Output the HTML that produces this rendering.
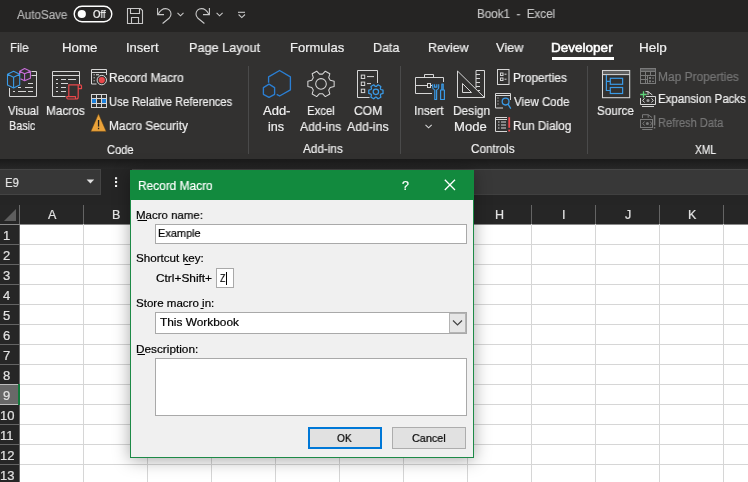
<!DOCTYPE html>
<html><head><meta charset="utf-8">
<style>
html,body{margin:0;padding:0;}
body{width:748px;height:482px;overflow:hidden;position:relative;background:#fff;font-family:"Liberation Sans",sans-serif;}
.a{position:absolute;box-sizing:border-box;}
.t{position:absolute;white-space:pre;line-height:1;transform-origin:0 0;will-change:transform;-webkit-text-stroke-width:0.2px;}
svg{position:absolute;left:0;top:0;overflow:visible;}
</style></head><body>
<!-- title bar -->
<div class="a" style="left:0;top:0;width:748px;height:32px;background:#252423"></div>
<!-- ribbon -->
<div class="a" style="left:0;top:32px;width:748px;height:127px;background:#323130"></div>
<div class="a" style="left:552px;top:57px;width:62px;height:3px;background:#ffffff"></div>
<div class="a" style="left:247.5px;top:66px;width:1px;height:88px;background:#4a4a4a"></div>
<div class="a" style="left:399.5px;top:66px;width:1px;height:88px;background:#4a4a4a"></div>
<div class="a" style="left:586.5px;top:66px;width:1px;height:88px;background:#4a4a4a"></div>
<!-- formula band -->
<div class="a" style="left:0;top:159px;width:748px;height:65px;background:#252525"></div>
<div class="a" style="left:0;top:159px;width:748px;height:10px;background:linear-gradient(#1a1a1a,#272727)"></div>
<div class="a" style="left:0;top:169px;width:101px;height:26px;background:#373737;border:1px solid #444;border-left:none"></div>
<div class="a" style="left:132px;top:169px;width:616px;height:26px;background:#383838;border-top:1px solid #464646;border-bottom:1px solid #404040"></div>
<!-- header row -->
<div class="a" style="left:0;top:205px;width:748px;height:19px;background:#262626"></div>
<!-- cells -->
<div class="a" style="left:20px;top:224px;width:728px;height:258px;background:#ffffff"></div>
<div class="a" style="left:0;top:224px;width:19px;height:258px;background:#262626"></div>
<div class="a" style="left:19px;top:205px;width:1px;height:277px;background:#6a6a6a"></div>
<div class="a" style="left:0;top:224px;width:748px;height:1px;background:#8a8a8a"></div>
<div class="a" style="left:83px;top:205px;width:1px;height:19px;background:#646464"></div>
<div class="a" style="left:83px;top:224px;width:1px;height:258px;background:#d6d6d6"></div>
<div class="a" style="left:147px;top:205px;width:1px;height:19px;background:#646464"></div>
<div class="a" style="left:147px;top:224px;width:1px;height:258px;background:#d6d6d6"></div>
<div class="a" style="left:211px;top:205px;width:1px;height:19px;background:#646464"></div>
<div class="a" style="left:211px;top:224px;width:1px;height:258px;background:#d6d6d6"></div>
<div class="a" style="left:275px;top:205px;width:1px;height:19px;background:#646464"></div>
<div class="a" style="left:275px;top:224px;width:1px;height:258px;background:#d6d6d6"></div>
<div class="a" style="left:339px;top:205px;width:1px;height:19px;background:#646464"></div>
<div class="a" style="left:339px;top:224px;width:1px;height:258px;background:#d6d6d6"></div>
<div class="a" style="left:403px;top:205px;width:1px;height:19px;background:#646464"></div>
<div class="a" style="left:403px;top:224px;width:1px;height:258px;background:#d6d6d6"></div>
<div class="a" style="left:467px;top:205px;width:1px;height:19px;background:#646464"></div>
<div class="a" style="left:467px;top:224px;width:1px;height:258px;background:#d6d6d6"></div>
<div class="a" style="left:531px;top:205px;width:1px;height:19px;background:#646464"></div>
<div class="a" style="left:531px;top:224px;width:1px;height:258px;background:#d6d6d6"></div>
<div class="a" style="left:595px;top:205px;width:1px;height:19px;background:#646464"></div>
<div class="a" style="left:595px;top:224px;width:1px;height:258px;background:#d6d6d6"></div>
<div class="a" style="left:659px;top:205px;width:1px;height:19px;background:#646464"></div>
<div class="a" style="left:659px;top:224px;width:1px;height:258px;background:#d6d6d6"></div>
<div class="a" style="left:723px;top:205px;width:1px;height:19px;background:#646464"></div>
<div class="a" style="left:723px;top:224px;width:1px;height:258px;background:#d6d6d6"></div>
<div class="a" style="left:787px;top:205px;width:1px;height:19px;background:#646464"></div>
<div class="a" style="left:787px;top:224px;width:1px;height:258px;background:#d6d6d6"></div>
<div class="a" style="left:20px;top:244px;width:728px;height:1px;background:#d6d6d6"></div>
<div class="a" style="left:0;top:244px;width:19px;height:1px;background:#646464"></div>
<div class="a" style="left:20px;top:264px;width:728px;height:1px;background:#d6d6d6"></div>
<div class="a" style="left:0;top:264px;width:19px;height:1px;background:#646464"></div>
<div class="a" style="left:20px;top:284px;width:728px;height:1px;background:#d6d6d6"></div>
<div class="a" style="left:0;top:284px;width:19px;height:1px;background:#646464"></div>
<div class="a" style="left:20px;top:304px;width:728px;height:1px;background:#d6d6d6"></div>
<div class="a" style="left:0;top:304px;width:19px;height:1px;background:#646464"></div>
<div class="a" style="left:20px;top:324px;width:728px;height:1px;background:#d6d6d6"></div>
<div class="a" style="left:0;top:324px;width:19px;height:1px;background:#646464"></div>
<div class="a" style="left:20px;top:344px;width:728px;height:1px;background:#d6d6d6"></div>
<div class="a" style="left:0;top:344px;width:19px;height:1px;background:#646464"></div>
<div class="a" style="left:20px;top:364px;width:728px;height:1px;background:#d6d6d6"></div>
<div class="a" style="left:0;top:364px;width:19px;height:1px;background:#646464"></div>
<div class="a" style="left:20px;top:384px;width:728px;height:1px;background:#d6d6d6"></div>
<div class="a" style="left:0;top:384px;width:19px;height:1px;background:#646464"></div>
<div class="a" style="left:20px;top:404px;width:728px;height:1px;background:#d6d6d6"></div>
<div class="a" style="left:0;top:404px;width:19px;height:1px;background:#646464"></div>
<div class="a" style="left:20px;top:424px;width:728px;height:1px;background:#d6d6d6"></div>
<div class="a" style="left:0;top:424px;width:19px;height:1px;background:#646464"></div>
<div class="a" style="left:20px;top:444px;width:728px;height:1px;background:#d6d6d6"></div>
<div class="a" style="left:0;top:444px;width:19px;height:1px;background:#646464"></div>
<div class="a" style="left:20px;top:464px;width:728px;height:1px;background:#d6d6d6"></div>
<div class="a" style="left:0;top:464px;width:19px;height:1px;background:#646464"></div>
<!-- row 9 header highlight -->
<div class="a" style="left:0;top:384px;width:18px;height:21px;background:#686868;border-top:1px solid #bdbdbd;border-bottom:1px solid #bdbdbd"></div>
<div class="a" style="left:18px;top:384px;width:2px;height:21px;background:#137a3c"></div>
<svg width="748" height="482">
 <!-- corner triangle -->
 <polygon points="16,209 16,221 4,221" fill="#5e5e5e"/>
 <!-- toggle -->
 <rect x="74.2" y="6.2" width="37.6" height="15.6" rx="7.8" fill="none" stroke="#fff" stroke-width="1.4"/>
 <circle cx="81.8" cy="14" r="4.1" fill="#fff"/>
 <!-- save -->
 <g fill="none" stroke="#c8c8c8" stroke-width="1.1">
  <path d="M127.5,8.5 H140.5 L142.5,10.5 V23.5 H127.5 Z"/>
  <path d="M130.5,8.5 V13.5 H139.5 V8.5"/>
  <path d="M131.5,23.5 V17.5 H138.5 V23.5"/>
 </g>
 <!-- undo -->
 <g fill="none" stroke="#c8c8c8" stroke-width="1.1" stroke-linecap="butt">
  <path d="M157.6,8 V14.6 H164"/>
  <path d="M158.3,14 C160.3,10.3 162.8,8.6 165.5,8.6 C168.6,8.6 171,11 171,14 C171,15.7 170.3,16.9 169.3,18 L162.6,23.5"/>
  <path d="M177.5,12.9 L180.5,15.8 L183.5,12.9"/>
  <path d="M209.4,8 V14.6 H203"/>
  <path d="M208.7,14 C206.7,10.3 204.2,8.6 201.5,8.6 C198.4,8.6 196,11 196,14 C196,15.7 196.7,16.9 197.7,18 L204.4,23.5"/>
  <path d="M216.6,12.9 L219.6,15.8 L222.6,12.9"/>
  <path d="M238,12.3 H245"/>
  <path d="M238.6,14.5 L241.8,17.6 L245,14.5"/>
 </g>
 <!-- name box arrow + dots -->
 <polygon points="86.6,179.4 94.2,179.4 90.4,183.6" fill="#e0e0e0"/>
 <rect x="115" y="177.2" width="2.1" height="2.1" fill="#f4f4f4"/>
 <rect x="115" y="181" width="2.1" height="2.1" fill="#f4f4f4"/>
 <rect x="115" y="184.9" width="2.1" height="2.1" fill="#f4f4f4"/>
<g fill="none" stroke="#d6d6d6" stroke-width="1">
 <path d="M9.5,88 V96.5 H36.5 V71.5 H31.5"/>
 <path d="M31.5,75.5 H36.5"/>
 <path d="M28,83.5 H33 M18,87.5 H21 M25,87.5 H33 M13,91.5 H15 M18,91.5 H26 M28,91.5 H33"/>
</g>
<g fill="none" stroke="#3a9ae6" stroke-width="1.1" stroke-linejoin="round">
 <path d="M7.5,74.3 L13.6,71.3 L19.7,74.3 V85 L13.6,88 L7.5,85 Z M7.5,74.3 L13.6,77.3 L19.7,74.3 M13.6,77.3 V88"/>
</g>
<g fill="none" stroke="#c76dd8" stroke-width="1.1" stroke-linejoin="round">
 <path d="M19.7,74.3 V71.2 L24.6,68.6 L30.4,71.2 V78.2 L24.6,80.8 L20.5,78.8 M19.7,71.2 L24.6,73.8 L30.4,71.2 M24.6,73.8 V80.8"/>
</g>
<g fill="none" stroke="#d6d6d6" stroke-width="1">
 <path d="M65.5,96.5 H52.5 V71.5 H79.5 V84"/>
 <path d="M52.5,75.5 H79.5"/>
 <path d="M56,79.5 H58 M61,79.5 H66 M68,79.5 H76 M56,83.5 H58 M61,83.5 H68 M56,87.5 H58 M61,87.5 H66 M56,91.5 H58 M61,91.5 H66"/>
</g>
<path d="M68.8,96.5 V84.8 H80 Q81.5,84.8 81.5,86.3 V88.6 H78.2 M78.2,84.8 V97 Q78.2,99 76.2,99 H68 Q66.8,99 66.8,97.8 V96.6 H75.5 V99" fill="none" stroke="#e9484b" stroke-width="1.2" stroke-linejoin="round"/>
<g fill="none" stroke="#d6d6d6" stroke-width="1">
 <path d="M96.5,84 H91.5 V69.5 H106.5 V75"/>
 <path d="M91.5,72.5 H106.5"/>
</g>
<g fill="#d6d6d6"><rect x="93.6" y="74.2" width="1.1" height="1.1"/><rect x="93.6" y="77.2" width="1.1" height="1.1"/><rect x="93.6" y="80.2" width="1.1" height="1.1"/><rect x="96" y="74.2" width="3" height="1.1"/></g>
<circle cx="101.8" cy="80.1" r="4.7" fill="#323130" stroke="#d6d6d6" stroke-width="1"/>
<circle cx="101.8" cy="80.1" r="3.1" fill="#e9484b"/>
<rect x="91.5" y="98.5" width="15" height="5" fill="#1c7fd9"/>
<rect x="96.5" y="98.5" width="5" height="5" fill="#323130"/>
<g fill="none" stroke="#d6d6d6" stroke-width="1">
 <rect x="91.5" y="94.5" width="15" height="13"/>
 <path d="M96.5,94.5 V107.5 M101.5,94.5 V107.5 M91.5,98.5 H106.5 M91.5,103.5 H106.5"/>
</g>
<path d="M98.5,113.8 L106.2,131.4 H90.8 Z" fill="#eaa23a" stroke="#5a3c10" stroke-width="0.5" stroke-linejoin="round"/>
<rect x="97.9" y="120" width="1.3" height="6.6" fill="#222"/>
<rect x="97.9" y="127.8" width="1.3" height="1.4" fill="#222"/>
<g fill="none" stroke="#2b7fd3" stroke-width="1.35" stroke-linejoin="round">
 <path d="M268.6,82.7 V76.9 L279.6,70.5 L290.4,76.9 V89.9 L279.6,96 L276.7,94.3"/>
 <path d="M269,84.2 L274.6,87.6 V94.3 L269,97.3 L263.4,94.3 V87.6 Z"/>
</g>
<g fill="none" stroke="#d6d6d6" stroke-width="1.05" stroke-linejoin="round">
 <path d="M330.22,80.30 L334.15,81.30 L334.15,86.50 L330.22,87.50 L328.73,90.09 L329.82,93.98 L325.32,96.58 L322.49,93.69 L319.51,93.69 L316.68,96.58 L312.18,93.98 L313.27,90.09 L311.78,87.50 L307.85,86.50 L307.85,81.30 L311.78,80.30 L313.27,77.71 L312.18,73.82 L316.68,71.22 L319.51,74.11 L322.49,74.11 L325.32,71.22 L329.82,73.82 L328.73,77.71 Z"/>
 <circle cx="321" cy="83.9" r="5.3"/>
</g>
<g fill="none" stroke="#d6d6d6" stroke-width="1">
 <path d="M369.5,97.5 H357.5 V70.5 H377.5 V83"/>
 <rect x="361.3" y="75.1" width="3.4" height="3.4"/>
 <rect x="361.3" y="82.1" width="3.4" height="3.4"/>
 <rect x="361.3" y="89.2" width="3.4" height="3.4"/>
 <path d="M367,76.6 H374 M367,83.6 H371"/>
</g>
<g fill="none" stroke="#3a9ae6" stroke-width="1.25" stroke-linejoin="round">
 <path d="M380.79,89.50 L383.02,90.20 L383.02,93.40 L380.79,94.10 L380.33,94.88 L380.85,97.17 L378.08,98.77 L376.35,97.18 L375.45,97.18 L373.72,98.77 L370.95,97.17 L371.47,94.88 L371.01,94.10 L368.78,93.40 L368.78,90.20 L371.01,89.50 L371.47,88.72 L370.95,86.43 L373.72,84.83 L375.45,86.42 L376.35,86.42 L378.08,84.83 L380.85,86.43 L380.33,88.72 Z"/>
 <circle cx="375.9" cy="91.8" r="2.7"/>
</g>
<g fill="none" stroke="#d6d6d6" stroke-width="1">
 <path d="M432,93.5 H415.5 V77.5 H443.5 V82"/>
 <path d="M424.5,77.5 V74.5 H433.5 V77.5"/>
 <path d="M415.5,85.5 H427.5 M430.5,85.5 H432"/>
 <rect x="427.5" y="83.5" width="3" height="4"/>
</g>
<g fill="none" stroke="#3a9ae6" stroke-width="1.2" stroke-linejoin="round">
 <path d="M432.7,84.2 V87.3 Q432.7,89.6 434.8,90 V99.5 H436.6 V90 Q438.7,89.6 438.7,87.3 V84.2 M434.6,84.2 V87.2 H436.8 V84.2"/>
 <path d="M440.6,99.5 V90 H444.4 V99.5 Z M441.8,90 V84.2 H443.2 V90"/>
</g>
<path d="M425.5,124.8 L428.6,127.8 L431.7,124.8" fill="none" stroke="#d6d6d6" stroke-width="1.1"/>
<g fill="none" stroke="#d6d6d6" stroke-width="1" stroke-linejoin="miter">
 <path d="M457.5,71 V97.5 H484.5 V70.5 H476 V88"/>
 <path d="M457.5,71 L484.5,97.5"/>
 <path d="M462.5,83.5 V92.5 H471.5 Z"/>
 <path d="M476,74.5 H480 M476,78.5 H480 M476,82.5 H480 M476,86.5 H480 M478,90.5 H480"/>
</g>
<g fill="none" stroke="#d6d6d6" stroke-width="1">
 <rect x="497.5" y="69.5" width="11.5" height="15"/>
 <rect x="500.5" y="73" width="2.5" height="2.5"/>
 <rect x="500.5" y="78" width="2.5" height="2.5"/>
 <path d="M504.5,74.2 H506.5 M504.5,79.2 H506.5"/>
</g>
<g fill="none" stroke="#d6d6d6" stroke-width="1">
 <path d="M503,108 H495.5 V93.5 H510.5 V100"/>
 <path d="M495.5,95.5 H510.5"/>
</g>
<g fill="#d6d6d6"><rect x="497.5" y="97.5" width="1" height="1"/><rect x="497.5" y="100.5" width="1" height="1"/><rect x="497.5" y="103.5" width="1" height="1"/></g>
<g fill="none" stroke="#3a9ae6" stroke-width="1.3">
 <circle cx="505.6" cy="101.6" r="3.4"/>
 <path d="M508,104.2 L510.8,108.6"/>
</g>
<g fill="none" stroke="#d6d6d6" stroke-width="1">
 <path d="M507,131.5 H495.5 V117.5 H507"/>
 <path d="M495.5,119.5 H507 M498,122 H499.5 M501,122 H506 M498,125 H499.5 M501,125 H506 M498,128 H499.5 M501,128 H506"/>
</g>
<rect x="508.3" y="117.2" width="1.8" height="10.6" fill="#e9484b"/>
<rect x="508.3" y="129.6" width="1.8" height="1.9" fill="#e9484b"/>
<rect x="603" y="71" width="26.2" height="3.6" fill="#5e5e5e"/>
<g fill="none" stroke="#d6d6d6" stroke-width="1.05">
 <rect x="602.5" y="70.5" width="27.2" height="27.2"/>
 <path d="M602.5,74.6 H629.7"/>
</g>
<g fill="none" stroke="#3a9ae6" stroke-width="1.2">
 <path d="M606.4,75 V90.5 H610.3 M606.4,81.3 H610.3"/>
 <rect x="610.3" y="78.3" width="12.3" height="6"/>
 <rect x="610.3" y="87.5" width="12.3" height="6"/>
</g>
<rect x="641" y="68.6" width="14.4" height="3" fill="#5a5a5a"/>
<g fill="none" stroke="#7a7a7a" stroke-width="1">
 <rect x="640.5" y="68.5" width="15" height="15"/>
 <path d="M640.5,71.5 H655.5 M640.5,75.5 H647 M640.5,79.5 H647 M645.5,71.5 V83.5 M650.5,71.5 V75 M655.5,71.5 V75"/>
 <rect x="647.5" y="75.5" width="8" height="8"/>
</g>
<g fill="#7a7a7a"><rect x="649" y="77" width="2" height="2"/><rect x="649" y="80.3" width="2" height="2"/><rect x="652" y="77.6" width="2" height="1"/><rect x="652" y="80.9" width="2" height="1"/></g>
<g fill="none" stroke="#d6d6d6" stroke-width="1">
 <path d="M646,96.5 H655.5 V104.5 H640.5 V98"/>
 <path d="M642,106.5 H654"/>
 <path d="M645.5,91.6 H648 L652.4,95 M648,91.6 V95"/>
 <path d="M644.5,98.3 L642.7,100.4 L644.5,102.5 M651.5,98.3 L653.3,100.4 L651.5,102.5"/>
</g>
<circle cx="648" cy="100.4" r="1.5" fill="#9a9a9a"/>
<path d="M643.5,91.2 V97.7 M640.2,94.5 H646.7" stroke="#5fd37a" stroke-width="1.3"/>
<g fill="none" stroke="#7a7a7a" stroke-width="1">
 <path d="M642.5,118 V114.7 H648.2 L652,117.5 M648.2,114.7 V117.7"/>
 <rect x="640.5" y="119.5" width="12" height="8"/>
 <path d="M642.2,129.5 H652.4"/>
 <path d="M644.5,121.5 L642.8,123.5 L644.5,125.5 M650.3,121.5 L651.5,123.5 L650.3,125.5"/>
</g>
<circle cx="647.4" cy="123.5" r="1.5" fill="#7a7a7a"/>
<rect x="653.8" y="115.2" width="1.5" height="10.2" fill="#7a7a7a"/>
<rect x="653.8" y="127" width="1.5" height="1.5" fill="#7a7a7a"/>
</svg>
<!-- dialog -->
<div class="a" style="left:130px;top:170px;width:344px;height:288px;background:#f0f0f0;border:1px solid #1d8a47;box-shadow:0 2px 16px rgba(0,0,0,0.35)"></div>
<div class="a" style="left:130px;top:170px;width:344px;height:30px;background:#128a3e"></div>
<div class="a" style="left:155px;top:224px;width:312px;height:20px;background:#fff;border:1px solid #a9a9a9"></div>
<div class="a" style="left:216px;top:268px;width:18px;height:20px;background:#fff;border:1px solid #a9a9a9"></div>
<div class="a" style="left:226px;top:272px;width:1px;height:13px;background:#000"></div>
<div class="a" style="left:155px;top:312px;width:312px;height:22px;background:#fff;border:1px solid #a9a9a9"></div>
<div class="a" style="left:449px;top:313px;width:17px;height:20px;background:#e6e6e6;border:1px solid #b4b4b4"></div>
<div class="a" style="left:155px;top:358px;width:312px;height:58px;background:#fff;border:1px solid #a9a9a9"></div>
<div class="a" style="left:308px;top:427px;width:74px;height:22px;background:#e1e1e1;border:2px solid #0078d7"></div>
<div class="a" style="left:392px;top:427px;width:74px;height:22px;background:#e1e1e1;border:1px solid #adadad"></div>
<svg width="748" height="482">
 <path d="M444.8,179.8 L455,190 M455,179.8 L444.8,190" stroke="#fff" stroke-width="1.3" fill="none"/>
 <path d="M453,320.5 L457.5,325 L462,320.5" stroke="#444" stroke-width="1.2" fill="none"/>
 <!-- underlines -->
 <path d="M137.5,220.5 H147 M184.5,264.5 H190.5 M200.5,308.5 H203.5 M137.5,354.5 H145" stroke="#000" stroke-width="1"/>
</svg>
<div class="t" style="top:9.003px;font-size:12px;color:#b4b4b4;left:17.200px;transform:scaleX(0.9694);">AutoSave</div>
<div class="t" style="top:9.009px;font-size:11px;color:#ffffff;left:93.400px;transform:scaleX(0.8667);">Off</div>
<div class="t" style="top:8.014px;font-size:12.3px;color:#c2c2c2;left:477.200px;transform:scaleX(0.9448);">Book1  -  Excel</div>
<div class="t" style="top:41.013px;font-size:13px;color:#f0f0f0;left:10.400px;transform:scaleX(0.8851);">File</div>
<div class="t" style="top:41.013px;font-size:13px;color:#f0f0f0;left:62.400px;transform:scaleX(1.0212);">Home</div>
<div class="t" style="top:41.013px;font-size:13px;color:#f0f0f0;left:126.400px;">Insert</div>
<div class="t" style="top:41.013px;font-size:13px;color:#f0f0f0;left:189.400px;transform:scaleX(0.9737);">Page Layout</div>
<div class="t" style="top:41.013px;font-size:13px;color:#f0f0f0;left:290.400px;">Formulas</div>
<div class="t" style="top:41.013px;font-size:13px;color:#f0f0f0;left:373.400px;transform:scaleX(0.9630);">Data</div>
<div class="t" style="top:41.013px;font-size:13px;color:#f0f0f0;left:428.400px;transform:scaleX(0.9524);">Review</div>
<div class="t" style="top:41.013px;font-size:13px;color:#f0f0f0;left:496.400px;transform:scaleX(0.9825);">View</div>
<div class="t" style="top:41.013px;font-size:13px;color:#f0f0f0;left:639.400px;transform:scaleX(1.0400);">Help</div>
<div class="t" style="top:41.014px;font-size:13.2px;color:#ffffff;left:551.400px;transform:scaleX(1.0255);-webkit-text-stroke-width:0.55px;">Developer</div>
<div class="t" style="top:105.015px;font-size:12.6px;color:#f0f0f0;left:7.600px;transform:scaleX(0.8975);">Visual</div>
<div class="t" style="top:120.003px;font-size:12.6px;color:#f0f0f0;left:9.200px;transform:scaleX(0.8535);">Basic</div>
<div class="t" style="top:105.015px;font-size:12.6px;color:#f0f0f0;left:46.400px;transform:scaleX(0.9377);">Macros</div>
<div class="t" style="top:72.013px;font-size:12px;color:#f0f0f0;left:109.200px;transform:scaleX(0.9905);">Record Macro</div>
<div class="t" style="top:96.006px;font-size:12px;color:#f0f0f0;left:109.200px;transform:scaleX(0.9274);">Use Relative References</div>
<div class="t" style="top:120.006px;font-size:12px;color:#f0f0f0;left:109.200px;transform:scaleX(0.9873);">Macro Security</div>
<div class="t" style="top:144.003px;font-size:12px;color:#f0f0f0;left:107.400px;transform:scaleX(0.9255);">Code</div>
<div class="t" style="top:105.009px;font-size:12.6px;color:#f0f0f0;left:263.400px;transform:scaleX(1.0312);">Add-</div>
<div class="t" style="top:121.003px;font-size:12.6px;color:#f0f0f0;left:268.400px;">ins</div>
<div class="t" style="top:105.009px;font-size:12.6px;color:#f0f0f0;left:307.000px;transform:scaleX(0.9038);">Excel</div>
<div class="t" style="top:121.003px;font-size:12.6px;color:#f0f0f0;left:300.400px;transform:scaleX(0.9605);">Add-ins</div>
<div class="t" style="top:105.009px;font-size:12.6px;color:#f0f0f0;left:354.400px;transform:scaleX(0.9590);">COM</div>
<div class="t" style="top:121.003px;font-size:12.6px;color:#f0f0f0;left:347.000px;transform:scaleX(0.9723);">Add-ins</div>
<div class="t" style="top:143.013px;font-size:12px;color:#f0f0f0;left:303.400px;transform:scaleX(0.9777);">Add-ins</div>
<div class="t" style="top:105.015px;font-size:12.6px;color:#f0f0f0;left:413.600px;transform:scaleX(0.9391);">Insert</div>
<div class="t" style="top:105.006px;font-size:12.6px;color:#f0f0f0;left:452.600px;transform:scaleX(0.9449);">Design</div>
<div class="t" style="top:121.006px;font-size:12.6px;color:#f0f0f0;left:454.400px;transform:scaleX(1.0369);">Mode</div>
<div class="t" style="top:72.000px;font-size:12px;color:#f0f0f0;left:513.400px;transform:scaleX(0.9850);">Properties</div>
<div class="t" style="top:96.003px;font-size:12px;color:#f0f0f0;left:514.400px;transform:scaleX(0.9570);">View Code</div>
<div class="t" style="top:120.003px;font-size:12px;color:#f0f0f0;left:513.400px;transform:scaleX(0.9828);">Run Dialog</div>
<div class="t" style="top:143.013px;font-size:12px;color:#f0f0f0;left:471.200px;transform:scaleX(0.9752);">Controls</div>
<div class="t" style="top:105.009px;font-size:12.6px;color:#f0f0f0;left:597.400px;transform:scaleX(0.9231);">Source</div>
<div class="t" style="top:71.000px;font-size:12px;color:#767676;left:658.400px;transform:scaleX(0.9938);">Map Properties</div>
<div class="t" style="top:93.013px;font-size:12px;color:#f0f0f0;left:658.400px;transform:scaleX(0.9542);">Expansion Packs</div>
<div class="t" style="top:117.000px;font-size:12px;color:#767676;left:658.400px;transform:scaleX(0.9231);">Refresh Data</div>
<div class="t" style="top:144.003px;font-size:12px;color:#f0f0f0;left:694.800px;transform:scaleX(0.8521);">XML</div>
<div class="t" style="top:176.012px;font-size:13px;color:#e6e6e6;left:5.200px;transform:scaleX(0.8646);">E9</div>
<div class="t" style="top:209.000px;font-size:12.5px;color:#e2e2e2;left:47.828px;">A</div>
<div class="t" style="top:209.000px;font-size:12.5px;color:#e2e2e2;left:111.828px;">B</div>
<div class="t" style="top:209.000px;font-size:12.5px;color:#e2e2e2;left:495.484px;">H</div>
<div class="t" style="top:209.000px;font-size:12.5px;color:#e2e2e2;left:562.258px;">I</div>
<div class="t" style="top:209.000px;font-size:12.5px;color:#e2e2e2;left:624.875px;">J</div>
<div class="t" style="top:209.000px;font-size:12.5px;color:#e2e2e2;left:687.828px;">K</div>
<div class="t" style="top:209.000px;font-size:12.5px;color:#e2e2e2;left:752.523px;">L</div>
<div class="t" style="top:229.012px;font-size:13px;color:#e2e2e2;left:3.383px;">1</div>
<div class="t" style="top:249.012px;font-size:13px;color:#e2e2e2;left:3.383px;">2</div>
<div class="t" style="top:269.012px;font-size:13px;color:#e2e2e2;left:3.383px;">3</div>
<div class="t" style="top:289.012px;font-size:13px;color:#e2e2e2;left:3.383px;">4</div>
<div class="t" style="top:309.012px;font-size:13px;color:#e2e2e2;left:3.383px;">5</div>
<div class="t" style="top:329.012px;font-size:13px;color:#e2e2e2;left:3.383px;">6</div>
<div class="t" style="top:349.012px;font-size:13px;color:#e2e2e2;left:3.383px;">7</div>
<div class="t" style="top:369.012px;font-size:13px;color:#e2e2e2;left:3.383px;">8</div>
<div class="t" style="top:389.012px;font-size:13px;color:#e2e2e2;left:3.383px;">9</div>
<div class="t" style="top:409.012px;font-size:13px;color:#e2e2e2;left:-0.234px;">10</div>
<div class="t" style="top:429.012px;font-size:13px;color:#e2e2e2;left:0.250px;">11</div>
<div class="t" style="top:449.012px;font-size:13px;color:#e2e2e2;left:-0.234px;">12</div>
<div class="t" style="top:469.012px;font-size:13px;color:#e2e2e2;left:-0.234px;">13</div>
<div class="t" style="top:180.009px;font-size:12.5px;color:#ffffff;left:137.800px;transform:scaleX(0.9502);">Record Macro</div>
<div class="t" style="top:180.000px;font-size:12.5px;color:#ffffff;left:401.523px;">?</div>
<div class="t" style="top:210.003px;font-size:11.5px;color:#000000;left:136.400px;transform:scaleX(0.9954);">Macro name:</div>
<div class="t" style="top:228.009px;font-size:11.5px;color:#000000;left:158.400px;transform:scaleX(0.9535);">Example</div>
<div class="t" style="top:253.006px;font-size:11.5px;color:#000000;left:136.400px;transform:scaleX(1.0094);">Shortcut key:</div>
<div class="t" style="top:273.006px;font-size:11.5px;color:#000000;left:155.800px;transform:scaleX(1.0315);">Ctrl+Shift+</div>
<div class="t" style="top:273.006px;font-size:11.5px;color:#000000;left:220.200px;transform:scaleX(0.7580);">Z</div>
<div class="t" style="top:298.003px;font-size:11.5px;color:#000000;left:136.400px;transform:scaleX(1.0040);">Store macro in:</div>
<div class="t" style="top:317.000px;font-size:11.5px;color:#000000;left:159.600px;transform:scaleX(1.0329);">This Workbook</div>
<div class="t" style="top:344.000px;font-size:11.5px;color:#000000;left:136.400px;transform:scaleX(1.0255);">Description:</div>
<div class="t" style="top:433.000px;font-size:11.5px;color:#000000;left:337.400px;transform:scaleX(0.8824);">OK</div>
<div class="t" style="top:433.000px;font-size:11.5px;color:#000000;left:412.000px;transform:scaleX(0.9429);">Cancel</div>
</body></html>
